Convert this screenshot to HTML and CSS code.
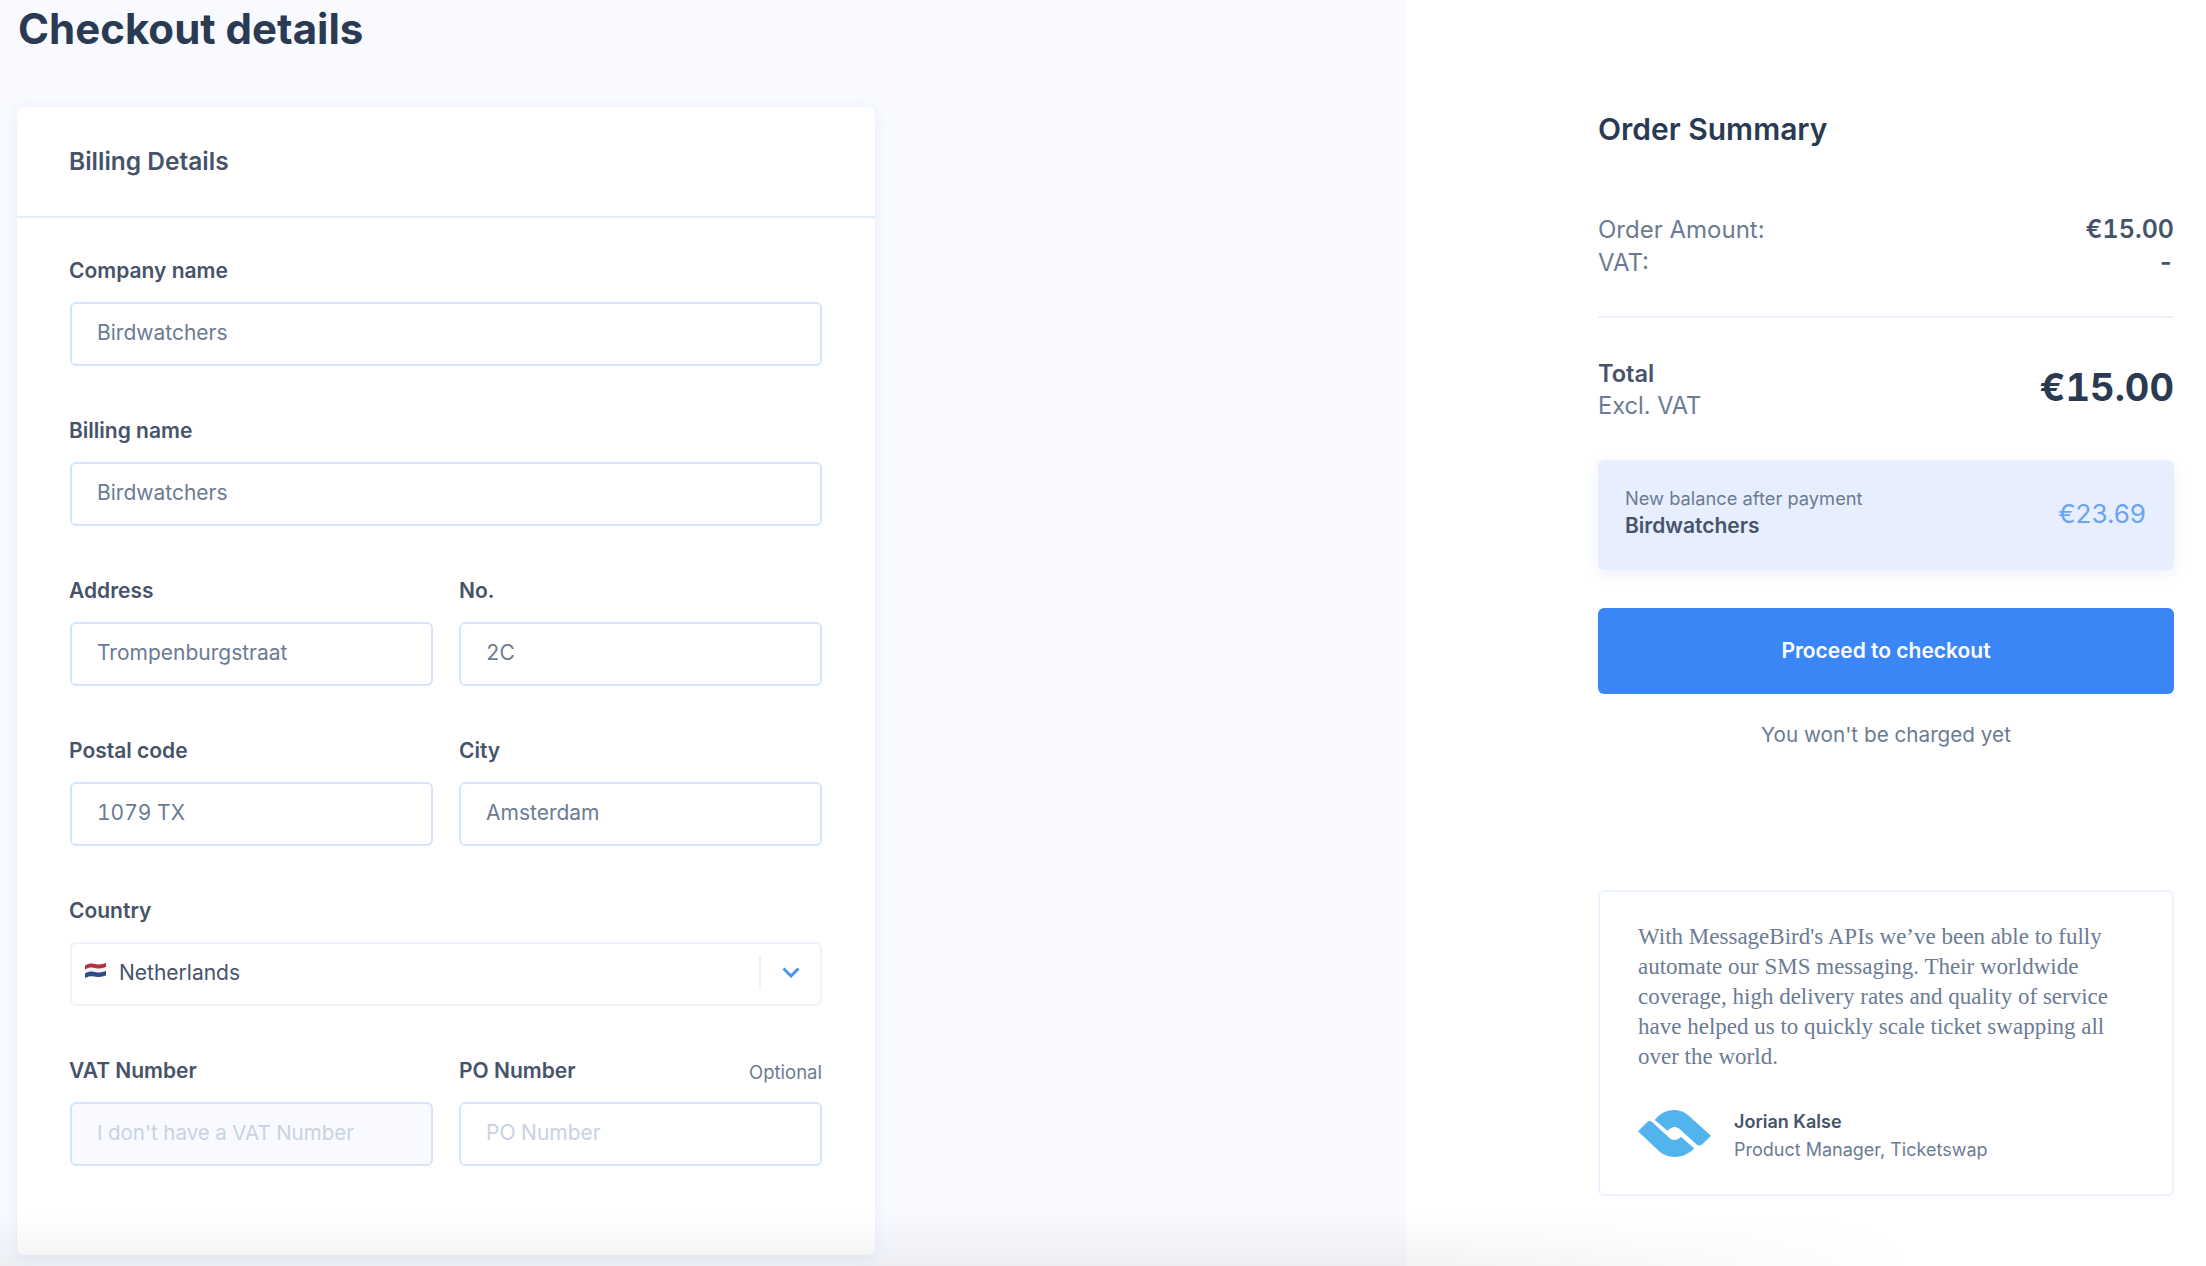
FILE: index.html
```html
<!DOCTYPE html>
<html lang="en">
<head>
  <meta charset="UTF-8" />
  <title>Checkout details</title>
  <link rel="stylesheet" href="styles.css">
</head>
<body>
  <div class="page">
    <main class="checkout">
      <h1>Checkout details</h1>
      <section class="card">
        <h2 class="card-title">Billing Details</h2>
        <form class="card-body">
          <div class="field">
            <label>Company name</label>
            <input type="text" value="Birdwatchers">
          </div>
          <div class="field">
            <label>Billing name</label>
            <input type="text" value="Birdwatchers">
          </div>
          <div class="field-row">
            <div class="field">
              <label>Address</label>
              <input type="text" value="Trompenburgstraat">
            </div>
            <div class="field">
              <label>No.</label>
              <input type="text" value="2C">
            </div>
          </div>
          <div class="field-row">
            <div class="field">
              <label>Postal code</label>
              <input type="text" value="1079 TX">
            </div>
            <div class="field">
              <label>City</label>
              <input type="text" value="Amsterdam">
            </div>
          </div>
          <div class="field">
            <label>Country</label>
            <div class="select">
              <svg class="flag" viewBox="0 0 21 15" width="21" height="15">
                <path d="M0 2.5C5 -0.5 8 0.8 11 1.2C15 1.7 18 1.2 21 0V5C18 6.2 15 6.7 11 6.2C8 5.8 5 4.5 0 7.5Z" fill="#b5333f"/>
                <path d="M0 6.5C5 3.5 8 4.8 11 5.2C15 5.7 18 5.2 21 4V9C18 10.2 15 10.7 11 10.2C8 9.8 5 8.5 0 11.5Z" fill="#f3f3f5"/>
                <path d="M0 10.5C5 7.5 8 8.8 11 9.2C15 9.7 18 9.2 21 8V12.5C18 13.7 15 14.2 11 13.7C8 13.3 5 12.5 0 15Z" fill="#2f4a8c"/>
              </svg>
              <span class="select-value">Netherlands</span>
              <span class="select-divider"></span>
              <svg class="chevron" viewBox="0 0 18 11" width="18" height="11">
                <path d="M1.5 1.5L9 9L16.5 1.5" fill="none" stroke="#4a94f0" stroke-width="3"/>
              </svg>
            </div>
          </div>
          <div class="field-row">
            <div class="field">
              <label>VAT Number</label>
              <input type="text" class="disabled" placeholder="I don't have a VAT Number">
            </div>
            <div class="field">
              <div class="label-row">
                <label>PO Number</label>
                <span class="optional">Optional</span>
              </div>
              <input type="text" placeholder="PO Number">
            </div>
          </div>
        </form>
      </section>
    </main>

    <aside class="summary">
      <h2 class="summary-title">Order Summary</h2>
      <div class="amounts">
        <div class="amount-row"><span>Order Amount:</span><strong>€15.00</strong></div>
        <div class="amount-row"><span>VAT:</span><strong>-</strong></div>
      </div>
      <div class="total">
        <div class="total-label">
          <strong>Total</strong>
          <span>Excl. VAT</span>
        </div>
        <div class="total-value">€15.00</div>
      </div>
      <div class="balance">
        <div>
          <div class="balance-label">New balance after payment</div>
          <div class="balance-name">Birdwatchers</div>
        </div>
        <div class="balance-value">€23.69</div>
      </div>
      <button class="checkout-button" type="button">Proceed to checkout</button>
      <p class="charged">You won't be charged yet</p>
      <div class="testimonial">
        <p class="quote">With MessageBird's APIs we’ve been able to fully automate our SMS messaging. Their worldwide coverage, high delivery rates and quality of service have helped us to quickly scale ticket swapping all over the world.</p>
        <div class="author">
          <svg class="logo" viewBox="40 45 218 140" width="73" height="47">
            <path d="M90 75C105 55 125 45 148 45C165 45 180 51 195 65L258 122L232 147C226 152 220 152 215 148L170 107C156 92 142 92 128 107Z" fill="#52b4ec"/>
            <path d="M40 108L68 81C72 77 78 77 82 81L130 125C142 138 156 138 168 125L208 160C192 176 172 185 150 185C130 185 112 177 100 165Z" fill="#52b4ec"/>
          </svg>
          <div>
            <div class="author-name">Jorian Kalse</div>
            <div class="author-role">Product Manager, Ticketswap</div>
          </div>
        </div>
      </div>
    </aside>
    <div class="bottom-fade"></div>
  </div>
</body>
</html>
```

FILE: styles.css
```css
* {
  box-sizing: border-box;
}
html, body {
  margin: 0;
  height: 100%;
}
body {
  font-family: Inter, 'Noto Sans', sans-serif;
  background-color: white;
  color: #46536a;
}
.page {
  position: relative;
  display: flex;
  height: 1266px;
  overflow: hidden;
}
.checkout {
  width: 1406px;
  padding-left: 17px;
  background-color: #f8faff;
}
h1 {
  margin: 0 0 49px 1px;
  font-size: 42px;
  line-height: 58px;
  font-weight: 700;
  color: #2a3a52;
}
.card {
  width: 858px;
  height: 1148px;
  background: white;
  border-radius: 6px;
  box-shadow: 0 2px 12px rgba(70,110,190,0.1);
}
.card-title {
  margin: 0;
  height: 111px;
  padding-left: 52px;
  font-size: 24.5px;
  line-height: 109px;
  font-weight: 600;
  border-bottom: 2px solid #e3eefc;
}
.card-body {
  display: flex;
  flex-direction: column;
  gap: 50px;
  padding: 38px 53px 0;
}
.field-row {
  display: grid;
  grid-template-columns: 1fr 1fr;
  gap: 26px;
}
.field label {
  display: block;
  margin-left: -1px;
  font-size: 21px;
  line-height: 30px;
  font-weight: 600;
  margin-bottom: 16px;
}
.field-row .field + .field label {
  margin-left: 0;
}
.label-row {
  display: flex;
  justify-content: space-between;
}
.optional {
  font-size: 18.5px;
  line-height: 32px;
  color: #6b7b93;
}
input {
  display: block;
  width: 100%;
  height: 64px;
  padding: 0 25px 3px;
  border: 2px solid #d5e5fb;
  border-radius: 6px;
  background: white;
  font-family: inherit;
  font-size: 21px;
  font-variant-numeric: tabular-nums;
  color: #6b7b93;
  outline: none;
}
input::placeholder {
  color: #c9d2e3;
  opacity: 1;
}
input.disabled {
  background-color: #f8faff;
  font-size: 20.5px;
}
.select {
  display: flex;
  align-items: center;
  height: 64px;
  padding: 0 20px 3px 13px;
  border: 2px solid #edf2fc;
  border-radius: 6px;
  font-size: 21px;
}
.flag {
  margin-right: 13px;
  margin-top: -4px;
}
.select-value {
  flex: 1;
}
.select-divider {
  width: 2px;
  height: 34px;
  margin-right: 21px;
  background-color: #ebf1fb;
}
.summary {
  flex: 1;
  padding: 111px 32px 0 192px;
}
.summary-title {
  margin: 0 0 66px;
  font-size: 30px;
  line-height: 36px;
  font-weight: 600;
  color: #2a3a52;
}
.amounts {
  padding-bottom: 37px;
  border-bottom: 2px solid #ebf2fe;
  margin-bottom: 40px;
}
.amount-row {
  display: flex;
  justify-content: space-between;
  font-size: 24px;
  line-height: 33px;
  color: #6b7b93;
}
.amount-row strong {
  font-size: 25px;
  font-weight: 600;
  font-variant-numeric: tabular-nums;
  color: #46536a;
}
.total {
  display: flex;
  justify-content: space-between;
  align-items: center;
  margin-bottom: 38px;
}
.total-label {
  display: flex;
  flex-direction: column;
  font-size: 23.6px;
  line-height: 32px;
  color: #6b7b93;
}
.total-label strong {
  font-weight: 600;
  color: #46536a;
}
.total-value {
  font-size: 38px;
  line-height: 56px;
  padding-bottom: 7px;
  font-weight: 700;
  font-variant-numeric: tabular-nums;
  color: #2a3a52;
}
.balance {
  display: flex;
  justify-content: space-between;
  align-items: center;
  height: 110px;
  padding: 0 28px 3px 27px;
  margin-bottom: 38px;
  background-color: #e7eefd;
  border-radius: 6px;
  box-shadow: 0 4px 14px rgba(70,110,190,0.1);
}
.balance-label {
  font-size: 18.3px;
  line-height: 26px;
  padding-bottom: 1px;
  color: #6b7b93;
}
.balance-name {
  font-size: 21px;
  line-height: 27px;
  padding-bottom: 4px;
  font-weight: 600;
}
.balance-value {
  font-size: 26px;
  color: #6ba4f3;
}
.checkout-button {
  display: block;
  width: 100%;
  height: 86px;
  padding-bottom: 3px;
  border: none;
  border-radius: 6px;
  background-color: #3b86f7;
  color: white;
  font-family: inherit;
  font-size: 21px;
  font-weight: 600;
}
.charged {
  margin: 26px 0 140px;
  text-align: center;
  font-size: 20.7px;
  line-height: 30px;
  color: #6b7b93;
}
.testimonial {
  height: 306px;
  padding: 30px 38px;
  border: 2px solid #ebf2fe;
  border-radius: 6px;
}
.quote {
  margin: 0 0 36px;
  font-family: 'Liberation Serif', serif;
  font-size: 23px;
  line-height: 30px;
  color: #6b7b93;
}
.author {
  display: flex;
  align-items: flex-start;
  gap: 23px;
}
.logo {
  margin-top: 2px;
}
.author-name {
  font-size: 18px;
  line-height: 27px;
  font-weight: 600;
}
.author-role {
  padding-top: 1px;
  font-size: 18px;
  line-height: 27px;
  color: #6b7b93;
}
.bottom-fade {
  position: absolute;
  left: 0;
  bottom: 0;
  width: 1920px;
  height: 54px;
  background: linear-gradient(to bottom, transparent, rgba(40,40,60,0.055));
  -webkit-mask-image: linear-gradient(to right, black 75%, transparent);
  mask-image: linear-gradient(to right, black 75%, transparent);
  pointer-events: none;
}
```
